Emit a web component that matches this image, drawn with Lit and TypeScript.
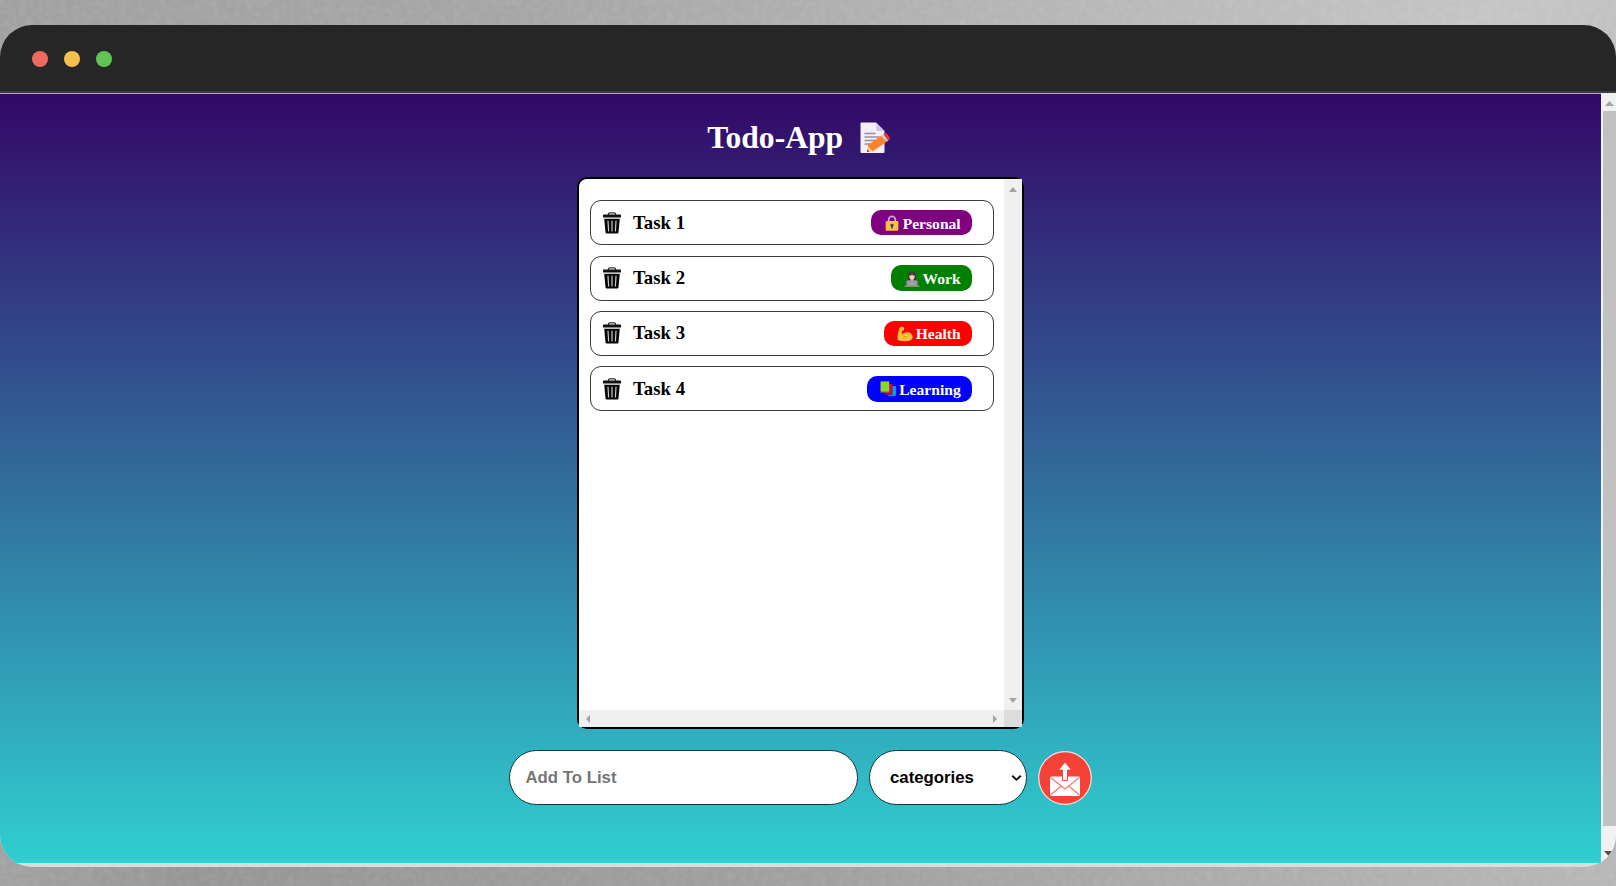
import { LitElement, html, css, svg } from "lit";
import { customElement, property } from "lit/decorators.js";

type Category = "personal" | "work" | "health" | "learning";

interface Task {
  name: string;
  category: Category;
}

const LABELS: Record<Category, string> = {
  personal: "Personal",
  work: "Work",
  health: "Health",
  learning: "Learning",
};

const GLYPHS = {
  personal: svg`
    <path d="M4.700 8V4.600a3.300 3.300 0 0 1 6.600 0V8" fill="none" stroke="#b9b4c4" stroke-width="1.700"/>
    <rect x="1.700" y="6" width="12.600" height="9.800" rx="1.200" fill="#f9c23c"/>
    <path d="M8 8.700a1.600 1.600 0 0 1 .8 3v1.800H7.200v-1.800a1.600 1.600 0 0 1 .8-3z" fill="#433b6b"/>`,
  work: svg`
    <path d="M4 9V4.600a4 4 0 0 1 8 0V9z" fill="#45353a"/>
    <path d="M2 14v-2.200a2.600 2.600 0 0 1 2.600-2.600h6.800a2.600 2.600 0 0 1 2.600 2.600V14z" fill="#636363"/>
    <path d="M6.600 7.500h2.800v2L8 10.700 6.600 9.500z" fill="#e8b9a2"/>
    <ellipse cx="8" cy="5.600" rx="2.700" ry="3" fill="#f7d2bf"/>
    <path d="M5.200 5c.4-2 1.500-2.700 2.900-2.700S10.600 3 10.800 5C9.500 4.700 8.700 4.300 8 3.500 7.300 4.300 6.500 4.700 5.200 5z" fill="#45353a"/>
    <rect x="2.600" y="9.600" width="10.800" height="6" rx=".8" fill="#9b9b9b"/>
    <rect x=".4" y="14.600" width="15.200" height="1.400" rx=".7" fill="#8a8a8a"/>
    <circle cx="8" cy="12.300" r=".8" fill="#d5d5d5"/>`,
  health: svg`
    <path d="M3.200 1.200C4.500.5 6 .6 6.800 1.500c.8.900.5 2.500-.6 2.900-.7.300-1 .2-1.200.3-.3 1.400-.2 2.700.3 3.900 1.200-1.800 3.500-2.500 5.300-2.300 3.400.2 5 2.700 5 5 0 2.900-3.500 4-7.600 4-3.800 0-6.500-.4-7.200-1.700C-.1 11.500 1.400 5.500 2.100 2.900c.1-.8.500-1.400 1.100-1.700z" fill="#f9c23c"/>
    <path d="M5.300 8.600c.3.900.8 1.500 1.500 2M6.400 11.700c1-1.100 2.500-1.400 3.700-.9M3.500 3.500c.7.200 1.400 0 1.900-.7" fill="none" stroke="#d67d00" stroke-width=".6"/>`,
  learning: svg`
    <rect x="8.200" y="5" width="7.500" height="10.300" rx=".5" fill="#0084ce"/>
    <rect x="9" y="5" width="6.700" height="9.200" rx=".4" fill="#00a6ed"/>
    <rect x="4.500" y="3" width="8" height="10.700" rx=".5" fill="#990838"/>
    <rect x="5.500" y="3" width="7" height="9.600" rx=".4" fill="#ca0b4a"/>
    <rect x=".3" y=".6" width="8.900" height="11.200" rx=".5" fill="#7a5c3c"/>
    <rect x=".8" y=".6" width="8.400" height="9.900" rx=".4" fill="#86d72f"/>`,
};

@customElement("todo-item")
export class TodoItem extends LitElement {
  @property({ attribute: false }) task!: Task;

  static styles = css`
    :host {
      display: flex;
      align-items: center;
      box-sizing: border-box;
      height: 45px;
      padding: 0 21px 0 10.5px;
      border: 1px solid #3c3c3c;
      border-radius: 11px;
    }
    .trash {
      width: 20px;
      height: 22px;
      flex: none;
    }
    .name {
      flex: 1;
      margin-left: 11.5px;
      font: bold 18.8px/22px "Liberation Serif", serif;
      color: #000;
    }
    .badge {
      display: flex;
      align-items: center;
      box-sizing: border-box;
      height: 25.5px;
      padding: 0 11.3px 0 13px;
      border-radius: 10px;
      color: #fff;
      font: bold 15.6px/24px "Liberation Serif", serif;
    }
    .label {
      padding-top: 2px;
    }
    .glyph {
      width: 16px;
      height: 16px;
      margin-right: 3px;
      padding-top: 1px;
    }
    .personal { background: #800080; }
    .work { background: #008000; }
    .health { background: #ff0000; }
    .learning { background: #0000ff; }
  `;

  render() {
    const { name, category } = this.task;
    return html`
      <svg class="trash" viewBox="0 0 20 22">
        <path d="M6.500 3.200V2.100c0-.7.500-1.200 1.200-1.200h4.600c.7 0 1.200.5 1.200 1.200v1.100" fill="none" stroke="#333" stroke-width="1.300"/>
        <path d="M2 2.600h16c.6 0 1 .4 1 1v1.800H1V3.600c0-.6.400-1 1-1z" fill="#111"/>
        <path d="M2.200 6.800h15.600l-1.300 13.400c-.1.900-.7 1.400-1.500 1.400H5c-.8 0-1.400-.5-1.500-1.400z" fill="#080808"/>
        <path d="M6 9l.6 10M10 9v10M14 9l-.6 10" stroke="#d0d0d0" stroke-width="1.150" stroke-linecap="round"/>
      </svg>
      <span class="name">${name}</span>
      <span class="badge ${category}">
        <svg class="glyph" viewBox="0 0 16 16">${GLYPHS[category]}</svg>
        <span class="label">${LABELS[category]}</span>
      </span>
    `;
  }
}

@customElement("app-root")
export class AppRoot extends LitElement {
  private tasks: Task[] = [
    { name: "Task 1", category: "personal" },
    { name: "Task 2", category: "work" },
    { name: "Task 3", category: "health" },
    { name: "Task 4", category: "learning" },
  ];

  static styles = css`
    :host {
      display: grid;
      box-sizing: border-box;
      height: 886px;
      padding: 25px 0 19px;
      overflow: hidden;
      background: linear-gradient(100deg, #a1a1a1 0%, #a6a6a6 30%, #b4b4b4 55%, #c5c5c5 85%, #bdbdbd 100%);
    }
    .backdrop {
      position: absolute;
      left: 0;
      top: 0;
      width: 1616px;
      height: 886px;
    }
    .window {
      position: relative;
      display: flex;
      flex-direction: column;
      height: 842px;
      border-radius: 32px;
      overflow: hidden;
      background: #d9dbdd;
    }
    .titlebar {
      display: flex;
      align-items: center;
      gap: 16px;
      box-sizing: border-box;
      height: 68px;
      padding-left: 32px;
      background: #262626;
      border-bottom: 2px solid #3e3e40;
    }
    .dot {
      width: 16px;
      height: 16px;
      margin-top: 2px;
      border-radius: 50%;
    }
    .close { background: #ec6a5e; }
    .minimise { background: #f4bf4f; }
    .zoom { background: #61c554; }
    .viewport {
      display: flex;
      height: 770px;
    }
    .page {
      flex: 1;
      display: flex;
      flex-direction: column;
      align-items: center;
      border-top: 1px solid #b3a5c6;
      background: linear-gradient(to top, #30cfd0 0%, #330867 100%);
    }
    .page-scroll {
      display: flex;
      flex-direction: column;
      align-items: center;
      box-sizing: border-box;
      width: 15px;
      background: #f1f1f1;
    }
    .page-up {
      width: 9px;
      height: 5px;
      margin: 8px 0 5px 1px;
    }
    .page-thumb {
      width: 13px;
      height: 715px;
      margin-left: 2px;
      background: #c1c1c1;
    }
    .page-down {
      width: 9px;
      height: 5px;
      margin: 25px 0 0;
      flex: none;
    }
    .heading {
      display: flex;
      align-items: center;
      height: 83px;
      margin: 0;
      gap: 14.5px;
      padding: 5px 2px 0 0;
      box-sizing: border-box;
      color: #fff;
      font: bold 31.6px/38px "Liberation Serif", serif;
    }
    .memo {
      width: 34px;
      height: 34px;
      margin-bottom: 1px;
    }
    .panel {
      display: grid;
      grid-template: 531px 17px / 425px 18px;
      border: 2px solid #000;
      border-radius: 10px;
      background: #fff;
    }
    .list {
      display: flex;
      flex-direction: column;
      gap: 10.4px;
      padding: 21.2px 10px 0 11px;
    }
    .vbar {
      display: flex;
      flex-direction: column;
      justify-content: space-between;
      align-items: center;
      box-sizing: border-box;
      padding: 8px 0 7px;
      background: #f0f0f0;
    }
    .hbar {
      display: flex;
      justify-content: space-between;
      align-items: center;
      padding: 0 7px;
      background: #f0f0f0;
    }
    .corner { background: #dcdcdc; }
    .tri-v { width: 8px; height: 5px; }
    .tri-h { width: 4px; height: 8px; }
    .form {
      display: flex;
      align-items: center;
      gap: 11px;
      margin-top: 21px;
    }
    .entry,
    .select {
      display: flex;
      align-items: center;
      box-sizing: border-box;
      height: 55px;
      border: 1px solid #1c3238;
      border-radius: 28px;
      background: #fff;
      font: bold 16.8px/20px "Liberation Sans", Arial, sans-serif;
    }
    .entry {
      width: 349px;
      padding: 1px 15.5px 0;
      color: #757575;
    }
    .entry::placeholder {
      color: #757575;
      opacity: 1;
    }
    .select {
      justify-content: space-between;
      width: 158px;
      padding: 0 4px 0 20px;
      color: #000;
    }
    .chevron { width: 11px; height: 8px; }
    .send { width: 54px; height: 54px; }
  `;

  render() {
    return html`
      <svg class="backdrop" viewBox="0 0 1616 886">
        <filter id="grain" x="0" y="0" width="100%" height="100%">
          <feTurbulence type="fractalNoise" baseFrequency="0.15" numOctaves="3" seed="4" />
          <feColorMatrix values="0 0 0 0 1  0 0 0 0 1  0 0 0 0 1  .5 0 0 0 -.17" />
        </filter>
        <linearGradient id="floor">
          <stop offset="0" stop-color="#a2a2a2" />
          <stop offset=".12" stop-color="#969696" />
          <stop offset=".5" stop-color="#a0a0a0" />
          <stop offset="1" stop-color="#b7b7b7" />
        </linearGradient>
        <rect y="800" width="1616" height="86" fill="url(#floor)" />
        <rect width="1616" height="886" filter="url(#grain)" opacity=".3" />
      </svg>
      <div class="window">
        <div class="titlebar">
          <span class="dot close"></span>
          <span class="dot minimise"></span>
          <span class="dot zoom"></span>
        </div>
        <div class="viewport">
          <main class="page">
            <h1 class="heading">
              <span>Todo-App</span>
              <svg class="memo" viewBox="0 0 34 34">
                <path d="M3.500 1.500h14.500l8.500 8.500V31q0 1-1 1H3.500q-1 0-1-1V2.500q0-1 1-1z" fill="#f3eef8" />
                <path d="M18.500 2l8 8h-6.500q-1.500 0-1.500-1.500z" fill="#cdc4d6" />
                <path d="M6.500 12.500h11M6.500 16h15M6.500 19.500h12M6.500 23h7" stroke="#998ea4" stroke-width="1.300" />
                <path d="M9.800 25.500l-.8 5.300 5.800-.4z" fill="#ffce7c" />
                <path d="M9 30.800l.4-2.200 1.900 2.100z" fill="#402a32" />
                <path d="M9.300 24.500L23.300 14.400l5.200 6.400-13.700 9.600z" fill="#ff822d" />
                <path d="M23.300 14.400l2-1.400 5.100 6.400-1.900 1.400z" fill="#d3d3d3" />
                <path d="M25.300 13l.8-.6q1.400-1 2.500.2l3 3.600q1 1.300-.4 2.400l-.8.800z" fill="#f8312f" />
              </svg>
            </h1>
            <section class="panel">
              <div class="list">
                ${this.tasks.map((task) => html`<todo-item .task=${task}></todo-item>`)}
              </div>
              <div class="vbar">
                <svg class="tri-v" viewBox="0 0 8 5"><path d="M0 5L4 0l4 5z" fill="#a3a3a3" /></svg>
                <svg class="tri-v" viewBox="0 0 8 5"><path d="M0 0h8L4 5z" fill="#a3a3a3" /></svg>
              </div>
              <div class="hbar">
                <svg class="tri-h" viewBox="0 0 4 8"><path d="M4 0v8L0 4z" fill="#a3a3a3" /></svg>
                <svg class="tri-h" viewBox="0 0 4 8"><path d="M0 0v8l4-4z" fill="#a3a3a3" /></svg>
              </div>
              <div class="corner"></div>
            </section>
            <div class="form">
              <input class="entry" placeholder="Add To List" />
              <div class="select">
                <span>categories</span>
                <svg class="chevron" viewBox="0 0 11 8">
                  <path d="M1.200 1.800l4.300 4 4.300-4" fill="none" stroke="#111" stroke-width="1.900" />
                </svg>
              </div>
              <svg class="send" viewBox="0 0 54 54">
                <circle cx="27" cy="27" r="26.300" fill="#f44336" stroke="#f3dcd9" stroke-width="1.300" />
                <path d="M13.500 25.500h27q1.500 0 1.500 1.500v16.500q0 1.500-1.500 1.500h-27q-1.500 0-1.500-1.500V27q0-1.500 1.500-1.500z" fill="#fff" />
                <path d="M12.500 26.500L27 38l14.500-11.500M12.500 44L23 35.200M41.500 44L31 35.200" fill="none" stroke="#f2796f" stroke-width="1.300" />
                <path d="M27 11l6.500 8h-4v10.500h-5V19h-4z" fill="#fff" stroke="#f44336" stroke-width="1" />
              </svg>
            </div>
          </main>
          <div class="page-scroll">
            <svg class="page-up" viewBox="0 0 9 5"><path d="M0 5L4.500 0 9 5z" fill="#a3a3a3" /></svg>
            <div class="page-thumb"></div>
            <svg class="page-down" viewBox="0 0 9 5"><path d="M0 0h9L4.500 5z" fill="#505050" /></svg>
          </div>
        </div>
      </div>
    `;
  }
}
